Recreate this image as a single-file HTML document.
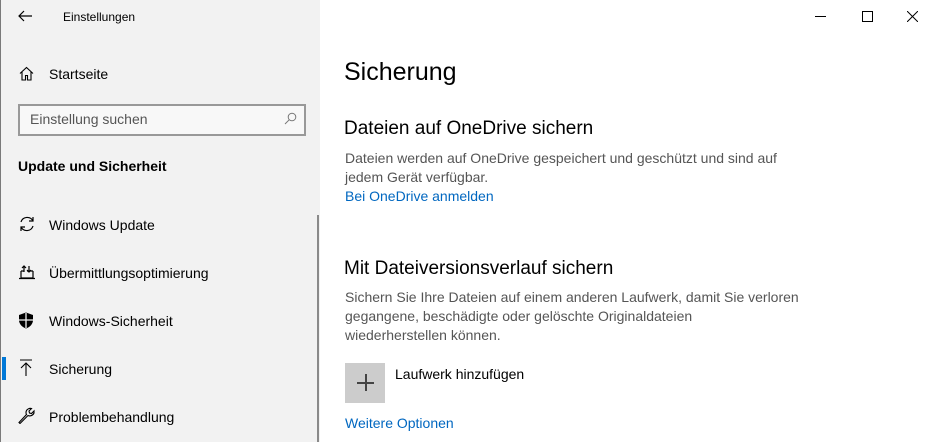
<!DOCTYPE html>
<html><head><meta charset="utf-8"><style>
*{margin:0;padding:0;box-sizing:border-box}
body{width:934px;height:442px;overflow:hidden;font-family:"Liberation Sans",sans-serif;background:#fff;position:relative;color:#000}
.side{position:absolute;left:0;top:0;width:320px;height:442px;background:#f2f2f2;border-left:1px solid #7a7a7a}
.t{position:absolute;white-space:nowrap}
.scroll{position:absolute;left:316px;top:215px;width:2px;height:227px;background:#8a8a8a}
.search{position:absolute;left:17px;top:104px;width:288px;height:32px;border:2px solid #999;background:#f8f8f8}
.nav{position:absolute;left:48px;font-size:15px;color:#000}
.ico{position:absolute;left:17px}
.sel{position:absolute;left:1px;top:357px;width:4px;height:23px;background:#0078d7}
.gray{color:#555;font-size:14px;line-height:19px}
.link{color:#0067c0;font-size:14px}
</style></head><body>
<div class="side">
<svg class="ico" style="left:16px;top:9px" width="16" height="14" viewBox="0 0 16 14"><path d="M15 7H2M7 2L2 7l5 5" fill="none" stroke="#000" stroke-width="1.2"/></svg>
<div class="t" style="left:62px;top:10px;font-size:12px">Einstellungen</div>
<svg class="ico" style="left:18px;top:66px" width="15" height="15" viewBox="0 0 15 15"><path d="M1 7.5L7.5 1.5 14 7.5M3 6v8h3.5V9.5h2V14H12V6" fill="none" stroke="#000" stroke-width="1.1"/></svg>
<div class="t nav" style="top:66px;font-size:14px">Startseite</div>
<div class="search"></div>
<div class="t" style="left:29px;top:111px;font-size:14px;color:#555">Einstellung suchen</div>
<svg class="ico" style="left:283px;top:112px" width="13" height="13" viewBox="0 0 13 13"><circle cx="8" cy="5" r="3.8" fill="none" stroke="#777"/><path d="M5.3 7.7L1 12" stroke="#777"/></svg>
<div class="t" style="left:17px;top:158px;font-size:14px;font-weight:bold">Update und Sicherheit</div>
<svg class="ico" style="left:17px;top:216px" width="18" height="16" viewBox="0 0 18 16"><path d="M3 6A6.5 6.5 0 0 1 15 5M15 10A6.5 6.5 0 0 1 3 11M15 1v4h-4M3 15v-4h4" fill="none" stroke="#000" stroke-width="1.2"/></svg>
<div class="t nav" style="top:217px;font-size:14px">Windows Update</div>
<svg class="ico" style="left:17px;top:264px" width="18" height="16" viewBox="0 0 18 16"><path d="M3 7v7h12V7M1 14.5h16M6 8V2M4 4l2-2 2 2M11 2v6M9 6l2 2 2-2M3 7h3M9 7h6" fill="none" stroke="#000" stroke-width="1.2"/></svg>
<div class="t nav" style="top:265px;font-size:14px">Übermittlungsoptimierung</div>
<svg class="ico" style="left:17px;top:312px" width="16" height="17" viewBox="0 0 16 17"><path d="M8 0.5L1 3v5c0 4 3 7 7 8.5 4-1.5 7-4.5 7-8.5V3z" fill="#000"/><path d="M8 1v15M1 8h14" stroke="#f2f2f2" stroke-width="1.3"/></svg>
<div class="t nav" style="top:313px;font-size:14px">Windows-Sicherheit</div>
<div class="sel"></div>
<svg class="ico" style="left:18px;top:359px" width="14" height="17" viewBox="0 0 14 17"><path d="M1 1h12M7 4v13M2 9l5-5 5 5" fill="none" stroke="#000" stroke-width="1.1"/></svg>
<div class="t nav" style="top:361px;font-size:14px">Sicherung</div>
<svg class="ico" style="left:17px;top:407px" width="17" height="17" viewBox="0 0 17 17"><path d="M1 15.5l1 1 8-8c2 1 5 0 6-2.5l0-2-2.5 2.5-2-.5-.5-2L13.5 1.5c-2-.5-5 .5-5.5 3.5 0 1 0 2 .5 2.5z" fill="none" stroke="#000" stroke-width="1.1"/></svg>
<div class="t nav" style="top:409px;font-size:14px">Problembehandlung</div>
<div class="scroll"></div>
</div>
<div style="position:absolute;left:815px;top:16px;width:11px;height:1px;background:#000"></div>
<div style="position:absolute;left:862px;top:11px;width:11px;height:11px;border:1px solid #000"></div>
<svg style="position:absolute;left:907px;top:11px" width="11" height="11" viewBox="0 0 11 11"><path d="M0 0L11 11M11 0L0 11" stroke="#000"/></svg>
<div class="t" style="left:344px;top:58px;font-size:25px">Sicherung</div>
<div class="t" style="left:344px;top:118px;font-size:19px">Dateien auf OneDrive sichern</div>
<div class="t gray" style="left:345px;top:149px">Dateien werden auf OneDrive gespeichert und geschützt und sind auf<br>jedem Gerät verfügbar.</div>
<div class="t link" style="left:345px;top:188px">Bei OneDrive anmelden</div>
<div class="t" style="left:344px;top:258px;font-size:19px">Mit Dateiversionsverlauf sichern</div>
<div class="t gray" style="left:345px;top:288px">Sichern Sie Ihre Dateien auf einem anderen Laufwerk, damit Sie verloren<br>gegangene, beschädigte oder gelöschte Originaldateien<br>wiederherstellen können.</div>
<div style="position:absolute;left:345px;top:363px;width:40px;height:40px;background:#ccc"></div>
<div style="position:absolute;left:357px;top:382px;width:17px;height:1.5px;background:#444"></div>
<div style="position:absolute;left:365px;top:374px;width:1.5px;height:17px;background:#444"></div>
<div class="t" style="left:395px;top:366px;font-size:14px">Laufwerk hinzufügen</div>
<div class="t link" style="left:345px;top:415px">Weitere Optionen</div>
</body></html>
